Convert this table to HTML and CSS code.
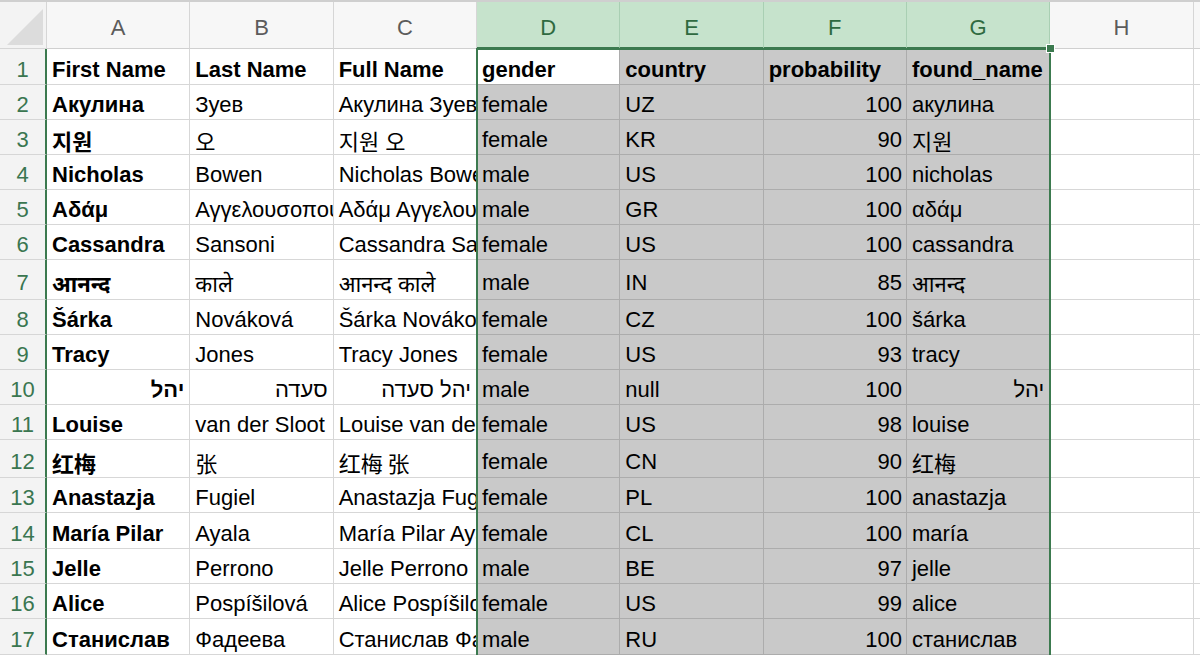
FILE: index.html
```html
<!DOCTYPE html>
<html lang="en">
<head>
<meta charset="utf-8">
<title>Sheet</title>
<link rel="stylesheet" href="styles.css">
</head>
<body>
<div class="sheet">
  <div class="row head">
    <div class="corner"><svg class="tri" width="36" height="36" viewBox="0 0 36 36"><polygon points="36,0 36,36 0,36" fill="#dcdcdc"/></svg></div>
    <div class="ch">A</div><div class="ch">B</div><div class="ch">C</div>
    <div class="ch sel">D</div><div class="ch sel">E</div><div class="ch sel">F</div><div class="ch sel">G</div>
    <div class="ch">H</div><div class="ch end"></div>
  </div>

  <div class="row r36">
    <div class="rh">1</div>
    <div class="c b">First Name</div><div class="c b">Last Name</div><div class="c b">Full Name</div>
    <div class="c b active">gender</div><div class="c g b">country</div><div class="c g b">probability</div><div class="c g b">found_name</div>
    <div class="c"></div><div class="c"></div>
  </div>

  <div class="row">
    <div class="rh">2</div>
    <div class="c b">Акулина</div><div class="c">Зуев</div><div class="c">Акулина Зуев</div>
    <div class="c g">female</div><div class="c g">UZ</div><div class="c g n">100</div><div class="c g">акулина</div>
    <div class="c"></div><div class="c"></div>
  </div>

  <div class="row">
    <div class="rh">3</div>
    <div class="c b">지원</div><div class="c">오</div><div class="c">지원 오</div>
    <div class="c g">female</div><div class="c g">KR</div><div class="c g n">90</div><div class="c g">지원</div>
    <div class="c"></div><div class="c"></div>
  </div>

  <div class="row">
    <div class="rh">4</div>
    <div class="c b">Nicholas</div><div class="c">Bowen</div><div class="c">Nicholas Bowen</div>
    <div class="c g">male</div><div class="c g">US</div><div class="c g n">100</div><div class="c g">nicholas</div>
    <div class="c"></div><div class="c"></div>
  </div>

  <div class="row">
    <div class="rh">5</div>
    <div class="c b">Αδάμ</div><div class="c">Αγγελουσοπούλου</div><div class="c">Αδάμ Αγγελουσοπούλου</div>
    <div class="c g">male</div><div class="c g">GR</div><div class="c g n">100</div><div class="c g">αδάμ</div>
    <div class="c"></div><div class="c"></div>
  </div>

  <div class="row">
    <div class="rh">6</div>
    <div class="c b">Cassandra</div><div class="c">Sansoni</div><div class="c">Cassandra Sansoni</div>
    <div class="c g">female</div><div class="c g">US</div><div class="c g n">100</div><div class="c g">cassandra</div>
    <div class="c"></div><div class="c"></div>
  </div>

  <div class="row r40">
    <div class="rh">7</div>
    <div class="c b">आनन्द</div><div class="c">काले</div><div class="c">आनन्द काले</div>
    <div class="c g">male</div><div class="c g">IN</div><div class="c g n">85</div><div class="c g">आनन्द</div>
    <div class="c"></div><div class="c"></div>
  </div>

  <div class="row">
    <div class="rh">8</div>
    <div class="c b">Šárka</div><div class="c">Nováková</div><div class="c">Šárka Nováková</div>
    <div class="c g">female</div><div class="c g">CZ</div><div class="c g n">100</div><div class="c g">šárka</div>
    <div class="c"></div><div class="c"></div>
  </div>

  <div class="row">
    <div class="rh">9</div>
    <div class="c b">Tracy</div><div class="c">Jones</div><div class="c">Tracy Jones</div>
    <div class="c g">female</div><div class="c g">US</div><div class="c g n">93</div><div class="c g">tracy</div>
    <div class="c"></div><div class="c"></div>
  </div>

  <div class="row">
    <div class="rh">10</div>
    <div class="c b rtl" dir="rtl">יהל</div><div class="c rtl" dir="rtl">סעדה</div><div class="c rtl" dir="rtl">יהל סעדה</div>
    <div class="c g">male</div><div class="c g">null</div><div class="c g n">100</div><div class="c g rtl" dir="rtl">יהל</div>
    <div class="c"></div><div class="c"></div>
  </div>

  <div class="row">
    <div class="rh">11</div>
    <div class="c b">Louise</div><div class="c">van der Sloot</div><div class="c">Louise van der Sloot</div>
    <div class="c g">female</div><div class="c g">US</div><div class="c g n">98</div><div class="c g">louise</div>
    <div class="c"></div><div class="c"></div>
  </div>

  <div class="row r38">
    <div class="rh">12</div>
    <div class="c b sc">红梅</div><div class="c sc">张</div><div class="c sc">红梅 张</div>
    <div class="c g">female</div><div class="c g">CN</div><div class="c g n">90</div><div class="c g sc">红梅</div>
    <div class="c"></div><div class="c"></div>
  </div>

  <div class="row">
    <div class="rh">13</div>
    <div class="c b">Anastazja</div><div class="c">Fugiel</div><div class="c">Anastazja Fugiel</div>
    <div class="c g">female</div><div class="c g">PL</div><div class="c g n">100</div><div class="c g">anastazja</div>
    <div class="c"></div><div class="c"></div>
  </div>

  <div class="row r36">
    <div class="rh">14</div>
    <div class="c b">María Pilar</div><div class="c">Ayala</div><div class="c">María Pilar Ayala</div>
    <div class="c g">female</div><div class="c g">CL</div><div class="c g n">100</div><div class="c g">maría</div>
    <div class="c"></div><div class="c"></div>
  </div>

  <div class="row">
    <div class="rh">15</div>
    <div class="c b">Jelle</div><div class="c">Perrono</div><div class="c">Jelle Perrono</div>
    <div class="c g">male</div><div class="c g">BE</div><div class="c g n">97</div><div class="c g">jelle</div>
    <div class="c"></div><div class="c"></div>
  </div>

  <div class="row">
    <div class="rh">16</div>
    <div class="c b">Alice</div><div class="c">Pospíšilová</div><div class="c">Alice Pospíšilová</div>
    <div class="c g">female</div><div class="c g">US</div><div class="c g n">99</div><div class="c g">alice</div>
    <div class="c"></div><div class="c"></div>
  </div>

  <div class="row r36">
    <div class="rh">17</div>
    <div class="c b">Станислав</div><div class="c">Фадеева</div><div class="c">Станислав Фадеева</div>
    <div class="c g">male</div><div class="c g">RU</div><div class="c g n">100</div><div class="c g">станислав</div>
    <div class="c"></div><div class="c"></div>
  </div>

  <div class="selection"><span class="handle"></span></div>
</div>
</body>
</html>
```

FILE: styles.css
```css
* { box-sizing: border-box; }
html, body {
  margin: 0;
  padding: 0;
  background: #ffffff;
  overflow: hidden;
}
body {
  font-family: "Liberation Sans", Arial, "Noto Sans", "Noto Sans CJK KR", "Noto Sans CJK SC", sans-serif;
  font-size: 22px;
  color: #000;
}
.sheet {
  position: relative;
  width: 1200px;
  height: 655px;
  border-top: 2px solid #cfcfcf;
  display: flex;
  flex-direction: column;
  overflow: hidden;
}
.row {
  display: grid;
  grid-template-columns: 47px repeat(8, 143.33px) 1fr;
  height: 35px;
  flex: none;
}
.row.head { height: 47px; }
.row.r36 { height: 36px; }
.row.r38 { height: 38px; }
.row.r40 { height: 40px; }

.corner {
  background: #f3f3f3;
  border-right: 1px solid #d6d6d6;
  border-bottom: 1px solid #d6d6d6;
  display: flex;
  align-items: flex-end;
  justify-content: flex-end;
  padding: 0 3px 3px 0;
}
.tri { display: block; }

.ch {
  background: #f7f7f7;
  border-right: 1px solid #d6d6d6;
  border-bottom: 1px solid #d0d0d0;
  color: #5c5c5c;
  display: flex;
  align-items: center;
  justify-content: center;
  padding-top: 6px;
}
.ch.sel {
  background: #c6e3cc;
  color: #2f6a40;
  border-right: 1px solid #a9cfb3;
  border-bottom: 2px solid #3c7a4f;
}
.ch.end { border-right: 0; }

.rh {
  background: #f3f3f3;
  color: #3a7650;
  border-bottom: 1px solid #d6d6d6;
  border-right: 2px solid #3c7a4f;
  display: flex;
  align-items: center;
  justify-content: center;
  padding-top: 6px;
}

.c {
  border-right: 1px solid #d7d7d7;
  border-bottom: 1px solid #d7d7d7;
  display: flex;
  align-items: center;
  padding: 6px 4px 0 5px;
  white-space: nowrap;
  overflow: hidden;
}
.c.b { font-weight: bold; }
.c.g {
  background: #c9c9c9;
  border-right-color: #acacac;
  border-bottom-color: #acacac;
}
.c.active {
  background: #ffffff;
  border-right-color: #acacac;
  border-bottom-color: #acacac;
}
.c.n { justify-content: flex-end; padding-right: 4px; }
.c.rtl { direction: rtl; padding-left: 4px; padding-right: 5px; }
.c.sc { font-family: "Noto Sans CJK SC", "Liberation Sans", sans-serif; }

.selection {
  position: absolute;
  left: calc(47px + 3 * 143.33px - 1px);
  top: 46px;
  width: calc(4 * 143.33px + 2px);
  bottom: -4px;
  border: 2px solid #3c7a4f;
  pointer-events: none;
}
.handle {
  position: absolute;
  right: -6px;
  top: -6px;
  width: 9px;
  height: 9px;
  background: #3c7a4f;
  border: 1px solid #ffffff;
}
```
